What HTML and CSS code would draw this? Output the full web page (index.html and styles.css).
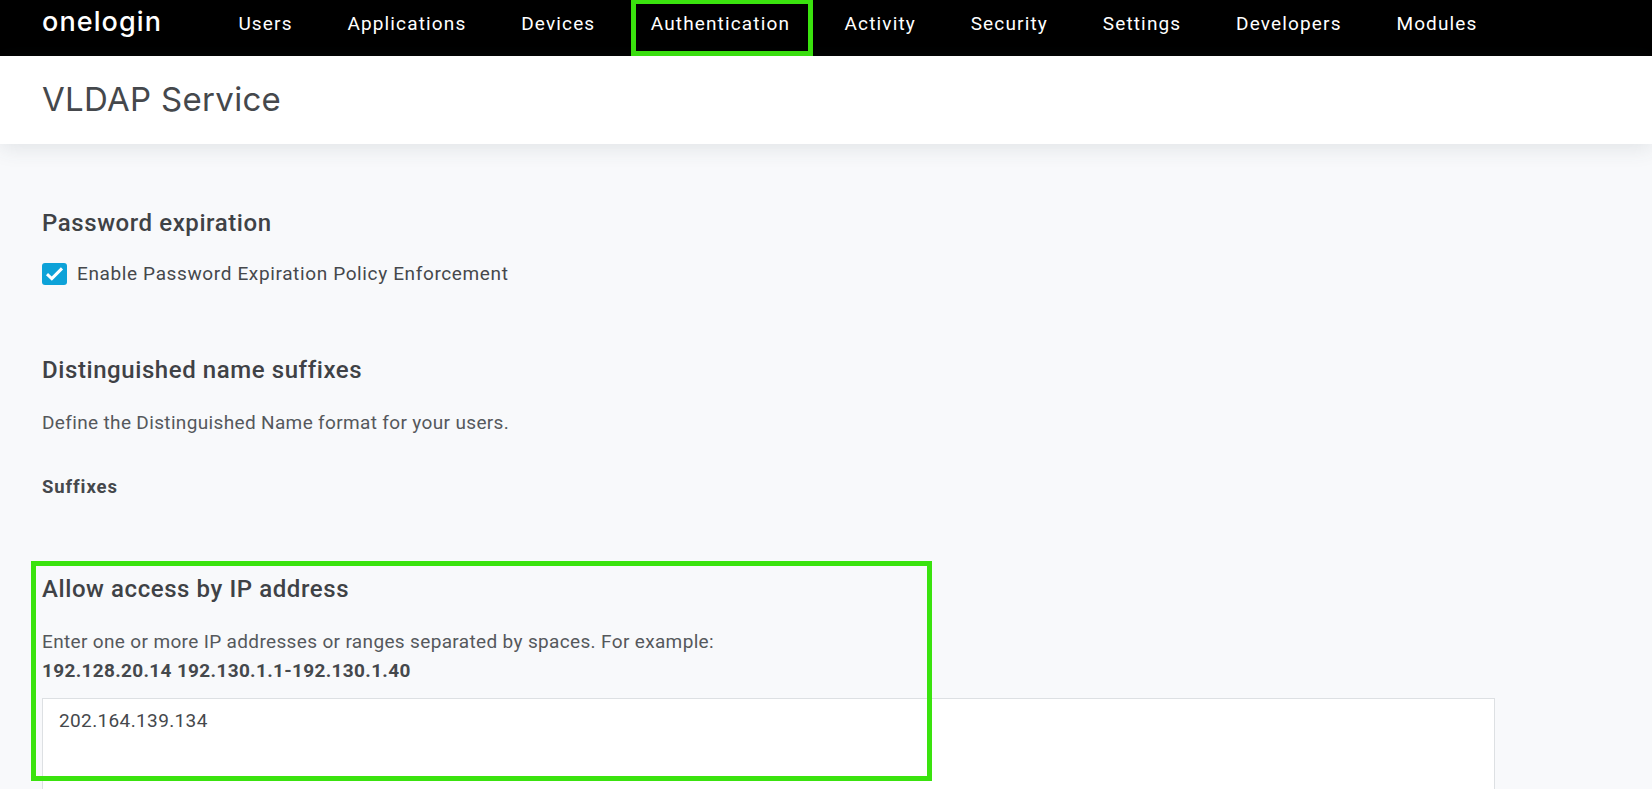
FILE: index.html
```html
<!DOCTYPE html>
<html lang="en">
<head>
<meta charset="utf-8">
<title>VLDAP Service</title>
<link rel="stylesheet" href="styles.css">
</head>
<body>
<nav class="topnav">
  <a class="logo">onelogin</a>
  <ul class="menu">
    <li class="item">Users</li>
    <li class="item">Applications</li>
    <li class="item">Devices</li>
    <li class="item item-marked">Authentication</li>
    <li class="item">Activity</li>
    <li class="item">Security</li>
    <li class="item">Settings</li>
    <li class="item">Developers</li>
    <li class="item">Modules</li>
  </ul>
</nav>
<header class="pagehead"><h1>VLDAP Service</h1></header>
<main class="content">
  <section class="sec-password">
    <h2>Password expiration</h2>
    <label class="check">
      <span class="box"><svg width="25" height="22" viewBox="0 0 25 22"><path d="M5 11.2 L9.8 15.6 L20 5.4" fill="none" stroke="#fff" stroke-width="3"/></svg></span>
      <span>Enable Password Expiration Policy Enforcement</span>
    </label>
  </section>
  <section class="sec-dn">
    <h2>Distinguished name suffixes</h2>
    <p class="desc">Define the Distinguished Name format for your users.</p>
    <p class="label">Suffixes</p>
  </section>
  <section class="sec-ip">
    <div class="annot"></div>
    <h2>Allow access by IP address</h2>
    <p class="desc">Enter one or more IP addresses or ranges separated by spaces. For example:</p>
    <p class="example">192.128.20.14 192.130.1.1-192.130.1.40</p>
    <div class="field">202.164.139.134</div>
  </section>
</main>
</body>
</html>
```
FILE: styles.css
```css
* { box-sizing: border-box; }
html, body { margin: 0; height: 789px; overflow: hidden; }
body { background: #f8f9fb; font-family: Roboto, "Liberation Sans", sans-serif; color: #45484c; }
.topnav { height: 56px; background: #000; display: flex; align-items: stretch; padding-left: 42px; color: #fff; }
.logo { width: 169px; font-family: Inter, sans-serif; font-size: 27px; line-height: 44px; font-weight: 500; letter-spacing: 1.1px; }
.menu { display: flex; list-style: none; margin: 0; padding: 0; }
.item { padding: 0 27.4px; font-size: 19px; line-height: 47px; letter-spacing: 1.15px; font-weight: 400; height: 56px; }
.item-marked { border: 5px solid #3ae30e; border-top-width: 4px; line-height: 39px; padding: 0 18px 0 15px; margin: 0 4px 0 8px; }
.pagehead { height: 88px; background: #fff; padding-left: 42px; box-shadow: 0 4px 20px rgba(60, 70, 80, 0.12); position: relative; }
.pagehead h1 { margin: 0; font-family: Inter, sans-serif; font-size: 33px; font-weight: 400; line-height: 86px; letter-spacing: 0.3px; color: #45484c; }
.content { padding: 0 0 0 42px; }
h2 { margin: 0; font-size: 24px; font-weight: 500; line-height: 28px; color: #3f4246; letter-spacing: 0.58px; }
.sec-password { padding-top: 65px; }
.check { display: flex; align-items: center; gap: 10px; margin-top: 24px; font-size: 19px; letter-spacing: 0.63px; line-height: 26px; }
.box { width: 25px; height: 22px; border-radius: 3px; background: #0da2d8; display: flex; align-items: center; justify-content: center; }
.sec-dn { padding-top: 69px; }
.desc { margin: 26px 0 0; font-size: 19px; line-height: 26px; letter-spacing: 0.35px; color: #55585c; }
.label { margin: 38px 0 0; font-size: 18.5px; font-weight: 700; line-height: 26px; letter-spacing: 0.9px; }
.sec-ip { padding-top: 75px; position: relative; }
.annot { position: absolute; left: -11px; top: 61px; width: 901px; height: 220px; border: 5px solid #3ae30e; z-index: 2; pointer-events: none; }
.example { margin: 3px 0 0; font-size: 19px; font-weight: 700; line-height: 26px; letter-spacing: 0.33px; }
.field { margin-top: 14px; width: 1453px; height: 120px; background: #fff; border: 1px solid #dde0e3; padding: 10px 16px; font-size: 19px; line-height: 24px; letter-spacing: 0.37px; }
```
